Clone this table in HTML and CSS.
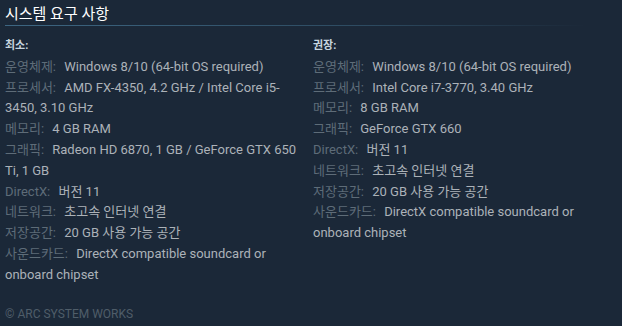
FILE: index.html
```html
<!DOCTYPE html>
<html lang="ko">
<head>
    <meta charset="UTF-8">
    <meta name="viewport" content="width=device-width, initial-scale=1.0">
    <title>시스템 요구 사항</title>
    <link rel="stylesheet" href="styles.css">
</head>
<body>
    <div class="sysreq">
        <h2 class="sysreq-title">시스템 요구 사항</h2>

        <div class="sysreq-cols">
            <div class="sysreq-col">
                <div class="tier">최소:</div>
                <ul class="reqs">
                    <li><span class="label">운영체제:</span> Windows 8/10 (64-bit OS required)</li>
                    <li><span class="label">프로세서:</span> AMD FX-4350, 4.2 GHz / Intel Core i5-3450, 3.10 GHz</li>
                    <li><span class="label">메모리:</span> 4 GB RAM</li>
                    <li><span class="label">그래픽:</span> Radeon HD 6870, 1 GB / GeForce GTX 650 Ti, 1 GB</li>
                    <li><span class="label">DirectX:</span> 버전 11</li>
                    <li><span class="label">네트워크:</span> 초고속 인터넷 연결</li>
                    <li><span class="label">저장공간:</span> 20 GB 사용 가능 공간</li>
                    <li><span class="label">사운드카드:</span> DirectX compatible soundcard or onboard chipset</li>
                </ul>
            </div>

            <div class="sysreq-col">
                <div class="tier">권장:</div>
                <ul class="reqs">
                    <li><span class="label">운영체제:</span> Windows 8/10 (64-bit OS required)</li>
                    <li><span class="label">프로세서:</span> Intel Core i7-3770, 3.40 GHz</li>
                    <li><span class="label">메모리:</span> 8 GB RAM</li>
                    <li><span class="label">그래픽:</span> GeForce GTX 660</li>
                    <li><span class="label">DirectX:</span> 버전 11</li>
                    <li><span class="label">네트워크:</span> 초고속 인터넷 연결</li>
                    <li><span class="label">저장공간:</span> 20 GB 사용 가능 공간</li>
                    <li><span class="label">사운드카드:</span> DirectX compatible soundcard or onboard chipset</li>
                </ul>
            </div>
        </div>

        <div class="copyright">© ARC SYSTEM WORKS</div>
    </div>
</body>
</html>
```

FILE: styles.css
```css
body {
    margin: 0;
    background-color: #1b2838;
    color: #acb2b8;
    font-family: Roboto, "Noto Sans CJK KR", sans-serif;
    font-size: 13px;
}

.sysreq {
    padding: 0 5px;
}

.sysreq-title {
    margin: 0;
    padding-top: 4px;
    padding-bottom: 1px;
    font-size: 15px;
    font-weight: normal;
    line-height: 20px;
    color: #ffffff;
}

/* fading rule under the heading */
.sysreq-title::after {
    content: "";
    display: block;
    height: 1px;
    margin-top: 1px;
    background: linear-gradient(to right, #3d6682 0%, #2d4a60 60%, #1b2838 95%);
}

.sysreq-cols {
    display: grid;
    grid-template-columns: 300px 300px;
    column-gap: 8px;
    margin-top: 9px;
}

.tier {
    font-size: 11px;
    font-weight: bold;
    line-height: 20.8px;
    color: #c6d4df;
}

.reqs {
    list-style: none;
    margin: 0;
    padding: 0;
    line-height: 20.8px;
}

.label {
    color: #5e6c78;
    margin-right: 5px;
}

.copyright {
    margin-top: 20px;
    font-size: 12px;
    line-height: 16px;
    color: #4f5d69;
}
```
